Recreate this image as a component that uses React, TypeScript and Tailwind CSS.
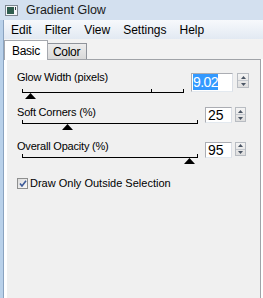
const ui = "font-['Liberation_Sans',Arial,sans-serif]";

function Slider({ widthClass, thumb, ticks = [] }: { widthClass: string; thumb: number; ticks?: number[] }) {
  return (
    <div className={`relative h-[4px] border-x border-b border-black ${widthClass}`}>
      {ticks.map((t) => (
        <div key={t} className="absolute top-0 h-[3px] w-px bg-black" style={{ left: t }} />
      ))}
      <svg className="absolute top-[4px]" style={{ left: thumb }} width="11" height="6">
        <polygon points="5.5,0 11,6 0,6" fill="#000" />
      </svg>
    </div>
  );
}

function Spinner({ className }: { className: string }) {
  return (
    <div className={`flex flex-col border border-[#b8bcc2] bg-gradient-to-b from-[#f4f4f4] to-[#dedede] ${className}`}>
      <div className="flex flex-1 items-center justify-center border-b border-[#c4c8ce]">
        <svg width="5" height="3">
          <polygon points="2.5,0 5,3 0,3" fill="#4a5564" />
        </svg>
      </div>
      <div className="flex flex-1 items-center justify-center">
        <svg width="5" height="3">
          <polygon points="0,0 5,0 2.5,3" fill="#4a5564" />
        </svg>
      </div>
    </div>
  );
}

export default function App() {
  return (
    <div className={`h-[298px] w-[263px] overflow-hidden bg-[#b9d1ea] text-black ${ui}`}>
      {/* title bar */}
      <div className="flex h-[20px] items-center bg-[#d3e0ef]">
        <svg className="ml-[5px]" width="13" height="11">
          <rect x="0.5" y="0.5" width="12" height="10" fill="#f4f6f8" stroke="#7c8690" />
          <rect x="2" y="2" width="7" height="7" fill="#2f5d4e" />
          <rect x="10" y="2" width="1" height="3" fill="#2f3a44" />
        </svg>
        <span className="ml-[8px] text-[12.5px] leading-[14px] text-[#1b1b1b]">Gradient Glow</span>
      </div>

      <div className="flex h-[278px]">
        {/* window frame */}
        <div className="w-[4px] border-r border-[#8aa3c0] bg-[#b9d1ea]" />

        <div className="flex flex-1 flex-col bg-white">
          {/* menu bar */}
          <div className="flex h-[19px] items-center gap-[13px] bg-gradient-to-b from-[#f7f9fc] to-[#e2e9f2] pl-[7px] text-[12px] leading-[14px]">
            <span>Edit</span>
            <span>Filter</span>
            <span>View</span>
            <span>Settings</span>
            <span>Help</span>
          </div>

          {/* tabs */}
          <div className="flex h-[20px] items-end bg-[#f2f2f2] text-[12px] tracking-[-0.3px]">
            <div className="relative z-10 -mb-px flex h-[20px] w-[44px] items-start border-x border-t border-[#a5a8ae] bg-white pl-[7px] pt-[3px] leading-[14px]">
              Basic
            </div>
            <div className="flex h-[16px] w-[39px] items-start border-r border-t border-[#8f939a] bg-gradient-to-b from-[#ececec] to-[#d9d9d9] pl-[5px] pt-[1px] leading-[14px]">
              Color
            </div>
          </div>

          {/* panel */}
          <div className="mr-[2px] flex flex-1 flex-col border-t border-r border-[#a0a3a8] border-l-[3px] border-l-white bg-[#f0f0f0] text-[11px] leading-[13px] tracking-[-0.2px]">
            <div className="mt-[11px] flex h-[35px] items-start">
              <div className="flex w-[184px] flex-col">
                <span className="pl-[10px]">Glow Width (pixels)</span>
                <div className="ml-[15px] mt-[5px]">
                  <Slider widthClass="w-[162px]" thumb={2} ticks={[128]} />
                </div>
              </div>
              <div className="mt-[2px] h-[19px] w-[42px] border border-[#abadb3] border-b-[#e3e9ef] border-r-[#dbdfe6] bg-white pl-[1px] pt-[1px]">
                <span className="bg-[#3399ff] text-[14px] leading-[15px] tracking-[-0.6px] text-white">9.02</span>
              </div>
              <Spinner className="ml-[4px] mt-[2px] h-[15px] w-[12px]" />
            </div>

            <div className="flex h-[34px] items-start">
              <div className="flex w-[198px] flex-col">
                <span className="pl-[10px]">Soft Corners (%)</span>
                <div className="ml-[15px] mt-[1px]">
                  <Slider widthClass="w-[176px]" thumb={39} />
                </div>
              </div>
              <div className="mt-[1px] h-[16px] w-[27px] border border-[#abadb3] border-b-[#e3e9ef] border-r-[#dbdfe6] bg-white pl-[2px] text-[14px] leading-[14px] tracking-normal">
                25
              </div>
              <Spinner className="ml-[3px] mt-[1px] h-[15px] w-[11px]" />
            </div>

            <div className="flex h-[36px] items-start">
              <div className="flex w-[198px] flex-col">
                <span className="pl-[10px]">Overall Opacity (%)</span>
                <div className="ml-[15px] mt-[1px]">
                  <Slider widthClass="w-[176px]" thumb={161} />
                </div>
              </div>
              <div className="mt-[2px] h-[16px] w-[27px] border border-[#abadb3] border-b-[#e3e9ef] border-r-[#dbdfe6] bg-white pl-[2px] text-[14px] leading-[14px] tracking-normal">
                95
              </div>
              <Spinner className="ml-[3px] mt-[2px] h-[14px] w-[11px]" />
            </div>

            <div className="mt-[1px] flex items-center pl-[10px]">
              <div className="flex h-[11px] w-[11px] items-center justify-center border border-[#8e8f8f] bg-gradient-to-br from-[#dcdcdc] to-[#fafafa]">
                <svg width="8" height="7">
                  <polyline points="1,3.5 3,6 7,0.8" fill="none" stroke="#3c5a99" strokeWidth="1.6" />
                </svg>
              </div>
              <span className="ml-[2px] tracking-normal">Draw Only Outside Selection</span>
            </div>
          </div>
        </div>
      </div>
    </div>
  );
}
